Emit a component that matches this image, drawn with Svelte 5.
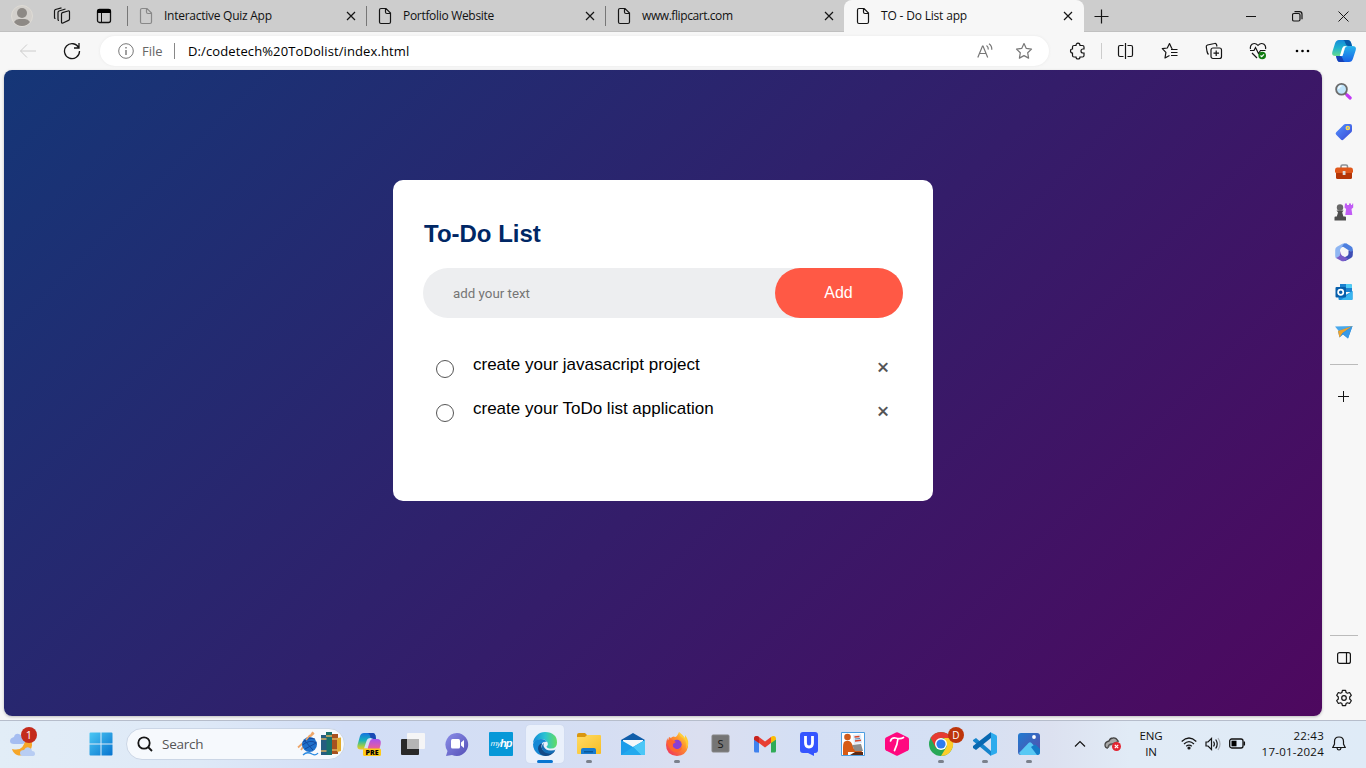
<script>
  const tabs = [
    { title: 'Interactive Quiz App', muted: true, ls: -0.26 },
    { title: 'Portfolio Website', ls: -0.31 },
    { title: 'www.flipcart.com', ls: -0.42 },
    { title: 'TO - Do List app', active: true, ls: -0.18 }
  ];
  const sidebar = ['search', 'tag', 'toolbox', 'games', 'm365', 'outlook', 'drop'];
  const apps = [
    { id: 'copilot' }, { id: 'taskview' }, { id: 'chat' }, { id: 'hp' },
    { id: 'edge', active: true }, { id: 'folder', open: true }, { id: 'mail' },
    { id: 'firefox', open: true }, { id: 's' }, { id: 'gmail' }, { id: 'u' },
    { id: 'reader' }, { id: 't' }, { id: 'chrome', open: true },
    { id: 'vscode', open: true }, { id: 'photos', open: true }
  ];
  let tasks = $state(['create your javasacript project', 'create your ToDo list application']);
  let draft = $state('');

  function add() {
    if (draft.trim()) {
      tasks.push(draft.trim());
      draft = '';
    }
  }
</script>

{#snippet page(muted)}
  <svg class="ln file" class:muted width="14" height="18" viewBox="0 0 14 18"><path d="M1.500 3q0-1.500 1.500-1.500h5l4.500 4.500v9q0 1.500-1.500 1.500H3q-1.500 0-1.500-1.500zM7.500 1.500V5q0 1.500 1.500 1.500h3.500" /></svg>
{/snippet}

{#snippet cross()}
  <svg class="ln bold" width="10" height="10" viewBox="0 0 10 10"><path d="M1 1l8 8M9 1l-8 8" /></svg>
{/snippet}

{#snippet sideIcon(id)}
  <svg width="20" height="20" viewBox="0 0 20 20">
    {#if id === 'search'}
      <path d="M11 11l2 2" stroke="#666" stroke-width="2" /><path d="M13 13l3.200 3" stroke="#c239f5" stroke-width="3.200" stroke-linecap="round" />
      <circle cx="7.500" cy="7.200" r="5.400" fill="#bfe4fa" stroke="#6c6c6c" stroke-width="1.800" /><path d="M4.600 7a3 3 0 0 1 3-3" stroke="#effaff" stroke-width="1.500" fill="none" />
    {:else if id === 'tag'}
      <path d="M10 2.500q.5-.5 1.500-.5H16q2 0 2 2v4.500q0 1-.7 1.700L9.500 17.500q-1.300 1.300-2.600 0l-4.700-4.700q-1.200-1.300 0-2.600z" fill="url(#blueTag)" /><circle cx="13.800" cy="6" r="1.600" fill="#7aa6e8" stroke="#ffdc4a" stroke-width="1.400" />
    {:else if id === 'toolbox'}
      <path d="M7 6V4.500q0-1.500 1.500-1.500h3.500q1.500 0 1.500 1.500V6" fill="none" stroke="#8b9095" stroke-width="1.600" /><rect x="2" y="9" width="16" height="8" rx="1.500" fill="#b53607" /><path d="M1 8q0-2.500 2-2.500h14q2 0 2 2.500v1.500q0 1.500-1.500 1.500h-15Q1 11 1 9.500z" fill="#e0581b" /><rect x="8.700" y="9" width="2.800" height="4" rx=".5" fill="#ddd" />
    {:else if id === 'games'}
      <path d="M11 1.500h2V3h2V1.500h2V3h1l.5-1.500h.7v4l-1.700 1.500.8 6h-7l.8-6-1.600-1.500z" fill="#c15cf5" />
      <circle cx="6" cy="5.500" r="3.200" fill="#686868" /><path d="M2.500 8.500h7L8.200 10.500l1.200 4H11q1 0 1 1V18.500H.5v-3q0-1 1-1h1.300l1.200-4z" fill="#4e4e4e" />
    {:else if id === 'm365'}
      <path d="M7 2.500Q8 1.500 10 1.500h3L7 6q-1 1-1 2.500v3.700q0 2-1.700 2.800L2 16.200q-.8-1-.8-2.500V8q0-2.200 1.800-3.200z" fill="#8fb6f2" />
      <path d="M10 1.500h2.500l4.500 2.700q1.800 1 1.800 3.300v4q-1.300-1.700-3-2.500L9.500 5Q8 4.300 7 6z" fill="#4e80df" />
      <path d="M18.800 7v6q0 2-1.800 3l-4.700 2.600q-1.800 1-3.800 0l-2-1 6.500-3.600q1.500-.8 1.500-2.500V8.300l2 1q2.300 1 2.300-2.300z" fill="#3f4fb5" />
      <path d="M6 9v3q0 2-1.700 2.800L2 16l5 2.800q2 1 4 0l3-2-4-2.200Q6 12.500 6 9z" fill="#7a5dc8" />
      <path d="M8 8l2.300-1.500 3.500 2v4L10.500 14.500 7.500 13z" fill="#f7f7f7" />
    {:else if id === 'outlook'}
      <path d="M6 2h10.500q1.500 0 1.500 1.500V10H6z" fill="#1b82cf" /><path d="M12 2h4.500Q18 2 18 3.500V6h-6z" fill="#50cdf5" /><path d="M4.500 9l7 4 7-4v8q0 1-1 1h-12q-1 0-1-1z" fill="#178cdc" /><path d="M18.500 9v8q0 1-1 1H7z" fill="#38b5ef" /><rect x="1.500" y="5" width="10.500" height="10.500" rx="1" fill="#075fab" /><circle cx="6.700" cy="10.200" r="2.600" stroke="#fff" stroke-width="1.700" fill="none" />
    {:else}
      <path d="M1 4.500l17.500-.5L6 10.500z" fill="#49a8eb" /><path d="M18.500 4L14 16.500l-5-4-3.500 3L4 9z" fill="#2387d7" /><path d="M18.500 4L8.500 11l-3 4.500L4 9z" fill="#f0a32b" /><path d="M18.500 4L8.500 11.500l5.500 5z" fill="#3899e6" />
    {/if}
  </svg>
{/snippet}

{#snippet appIcon(id)}
  <svg width="26" height="26" viewBox="0 0 26 26">
    {#if id === 'copilot'}
      <path d="M8 2h9q2 0 2.500 2.500L20 8h-3.500q-2 0-2.700 2.500L12 16q-1 2.500-3.500 2.500H5q-4.500 0-3.500-4.500l2.500-9Q5 2 8 2z" fill="url(#cpLeft)" /><path d="M13 2h4q2 0 2.500 2.500L20 8h-3.500q-2 0-2.500-3-.5-3-3-3z" fill="#1949b4" /><path d="M14.500 8H21q4.500 0 3.700 5L23 20q-1 4-4 4H9l2.500-6L13 11q.5-3 1.500-3z" fill="url(#cpRight)" /><path d="M17.500 8h-1q-2 0-2.700 2.500L12 16l-.5 1.500H8L10.500 10q.8-3 4-3z" fill="#d5dff5" /><rect x="7" y="17.500" width="18" height="7.500" rx="1.500" fill="#ffca18" /><text x="16" y="23.700" text-anchor="middle" class="pre">PRE</text>
    {:else if id === 'taskview'}
      <rect x="1" y="8" width="18" height="16" rx="1" fill="#292929" /><rect x="7" y="2" width="18" height="16" rx="1" fill="#f5f5f6" /><path d="M7 8h12v10H7z" fill="#b5b5b5" />
    {:else if id === 'chat'}
      <path d="M13 2a11.500 11.500 0 1 1-5 22L2 25l1.500-5A11.500 11.500 0 0 1 13 2z" fill="url(#violet)" /><rect x="7" y="8" width="9" height="9.500" rx="1.500" fill="#fff" /><path d="M17 11.500l3-2.500v8l-3-2.500z" fill="#fff" />
    {:else if id === 'hp'}
      <rect x="1" y="1" width="24" height="24" rx="1" fill="#0698d8" /><text x="2.500" y="15" class="my">my</text><text x="12" y="16" class="hp">hp</text>
    {:else if id === 'edge'}
      <path d="M1 12A12 12 0 0 1 13 1q12 .5 12 10.500 0 6-6 6-4 0-4.500-2 2.500-2 .5-5Q9 5 1 12z" fill="url(#edgeTop)" /><path d="M1 13Q3 8 9 8q4 0 6 3-5-1-6 4 0 7 7 9-5 2-10-1-5-4-5-10z" fill="#1688d5" /><path d="M10 12.500q-2 5 3 8 4 2.500 10-.5-4 5.500-10 5-6-1-7-7 0-5 4-5.500z" fill="#124987" /><path d="M13 11q-2 1-1.500 4 2 5 8 4.500 3 0 4-1-1 3-4 4-7 1-9.500-4.500-1-4.500 3-7z" fill="#136db6" />
    {:else if id === 'folder'}
      <path d="M1 4q0-2 2-2h6l2 2v3H1z" fill="#d99610" /><path d="M1 6h8l2-2h13q1 0 1 1v17q0 1-1 1H2q-1 0-1-1z" fill="url(#folder)" /><path d="M5 23v-4q0-2 2-2h11q2 0 2 2v4z" fill="#167bd0" /><path d="M8 20h9v1.500H8z" fill="#095899" />
    {:else if id === 'mail'}
      <path d="M1 9L13 2l12 7v3H1z" fill="#105eaa" /><path d="M3 9h20v6l-10 4-10-4z" fill="#f5f7fa" /><path d="M1 9l12 7 12-7v15H1z" fill="#1d9cea" /><path d="M25 9L13 16l8 8h4z" fill="#4bc7f7" /><path d="M1 24l12-8 8 8z" fill="#23a9ee" />
    {:else if id === 'firefox'}
      <path d="M8 6q2-1 3 0 2 0 4-5 1 4 4 5 6 4 5 10-2 8.500-11 9Q2 24 2 14q0-4 1.500-7l.5 3 1-4 2 1z" fill="url(#fire)" /><path d="M15 1q0 4 4 6 5 4 3 11 4-5 1-11l-2-3v3q-2-3-6-6z" fill="#ffcd35" /><circle cx="13" cy="13.500" r="4.700" fill="#8b3fd0" /><path d="M3 10q4-3 7 0l2 1-3 2q-1 4 3 5 4 1 6-2-1 6-7 5-6-1-8-11z" fill="#ff652d" />
    {:else if id === 's'}
      <rect x="4" y="4" width="17" height="17" rx="1" fill="#757575" stroke="#858585" /><text x="12.500" y="16.500" text-anchor="middle" class="letter" fill="#151515">S</text>
    {:else if id === 'gmail'}
      <path d="M2 8v12q0 1.500 1.500 1.500H7V11z" fill="#3f82ee" /><path d="M24 8v12q0 1.500-1.500 1.500H19V11z" fill="#2fab57" /><path d="M2 8q0-3 2.500-3 1.300 0 2.500 1l6 4.500L19 6v6l-6 4.500L7 12l-5-3.500z" fill="#e83e33" /><path d="M2 8q0-3 2.500-3Q6 5 7 6v6L2 8.500z" fill="#c5221f" /><path d="M24 8q0-3-2.500-3Q20 5 19 6v6l5-3.500z" fill="#fbbc04" />
    {:else if id === 'u'}
      <path d="M7 1h12q3 0 3 3v15q0 3-3 3h-1v3l-6-3H7q-3 0-3-3V4q0-3 3-3z" fill="#3555ff" /><path d="M9.500 5v7q0 4 3.500 4t3.500-4V5" fill="none" stroke="#fff" stroke-width="2.800" />
    {:else if id === 'reader'}
      <path d="M1.500 1.500h23v23h-23z" fill="#fff" stroke="#4d9ee1" /><path d="M13 4l8-1 1 9-8 1z" fill="#dceafa" /><path d="M14.500 6l5-.5M15 10l6-.7" stroke="#d94728" stroke-width="1.400" /><path d="M15 8l5-.5" stroke="#5b8ab0" /><circle cx="7.500" cy="6" r="3.300" fill="#cf5a1c" /><path d="M3 16q0-6 3-6 4-1 6 3l2 5h7l1 3H8v3H3z" fill="#d65b16" /><path d="M12 14l9-1 2 7h-8z" fill="#8c8c8c" /><path d="M15 21h8v3H10z" fill="#5c2a15" />
    {:else if id === 't'}
      <path d="M12 1.500q1-.5 2 0l10 5q1 .5 1 2v9q0 1.500-1 2l-10 5q-1 .5-2 0l-10-5q-1-.5-1-2v-9q0-1.500 1-2z" fill="#ff087f" /><path d="M6.500 10q1-3.500 5-3 5 1.500 8-.5M14 7.500q-.5 6-3.500 12" fill="none" stroke="#fff" stroke-width="1.700" stroke-linecap="round" />
    {:else if id === 'chrome'}
      <circle cx="13" cy="13" r="12" fill="#27a857" /><path d="M2.600 7A12 12 0 0 1 23.500 7H13L8 17z" fill="#e63b32" /><path d="M23.500 7A12 12 0 0 1 13 25l6-10-3-8z" fill="#fdce2b" /><circle cx="13" cy="13" r="6" fill="#fff" /><circle cx="13" cy="13" r="4.600" fill="#2d7cf0" />
    {:else if id === 'vscode'}
      <path d="M1 9l3-2 15 13v5L1 10z" fill="#1684cc" /><path d="M1 17l3 2L19 7V1L1 15z" fill="#0868b1" /><path d="M18 1l6 3q1 .5 1 2v15q0 1-1 1.500L18 25q1 0 1-2V3q0-2-1-2z" fill="#2cabed" />
    {:else}
      <rect x="2" y="2" width="22" height="22" rx="3" fill="url(#photo)" /><path d="M3 22l9.500-10q1.500-1.500 3 0l8.500 9q0 3-3 3H5q-1 0-2-2z" fill="#57c8f4" /><path d="M15 16l3-2q1-1 2 0l4 4v3q0 3-3 3z" fill="#147bc7" /><circle cx="18" cy="6" r="1.900" fill="#fff" />
    {/if}
  </svg>
{/snippet}

<svg class="defs" width="0" height="0">
  <defs>
    <linearGradient id="blueTag" x2="1" y2="1"><stop stop-color="#5494ff" /><stop offset="1" stop-color="#3a47d5" /></linearGradient>
    <linearGradient id="cpLeft" x2="0" y2="1"><stop stop-color="#1673df" /><stop offset=".45" stop-color="#17b2ba" /><stop offset=".8" stop-color="#a4cf42" /><stop offset="1" stop-color="#f5c52b" /></linearGradient>
    <linearGradient id="cpRight" x2="0" y2="1"><stop stop-color="#a653ee" /><stop offset=".5" stop-color="#e25ca5" /><stop offset="1" stop-color="#f58a45" /></linearGradient>
    <linearGradient id="violet" x2="1" y2="1"><stop stop-color="#8b8ee8" /><stop offset="1" stop-color="#5550b7" /></linearGradient>
    <linearGradient id="edgeTop"><stop stop-color="#148bd8" /><stop offset=".5" stop-color="#2bc3d2" /><stop offset="1" stop-color="#62dc62" /></linearGradient>
    <linearGradient id="folder" x2="1" y2="1"><stop stop-color="#ffdb65" /><stop offset="1" stop-color="#f7bd24" /></linearGradient>
    <linearGradient id="fire" x1="1" x2="0" y2="1"><stop stop-color="#fff044" /><stop offset=".4" stop-color="#ff922b" /><stop offset="1" stop-color="#ed2564" /></linearGradient>
    <linearGradient id="photo" x2="1" y2="1"><stop stop-color="#207bd1" /><stop offset="1" stop-color="#574eaa" /></linearGradient>
    <linearGradient id="win" x2="1" y2="1"><stop stop-color="#4cc8f4" /><stop offset="1" stop-color="#0673cf" /></linearGradient>
    <linearGradient id="pilotA" x2="0" y2="1"><stop stop-color="#168ad9" /><stop offset=".5" stop-color="#20b3ce" /><stop offset="1" stop-color="#65da8e" /></linearGradient>
    <linearGradient id="pilotB" x2="0" y2="1"><stop stop-color="#27b4ec" /><stop offset="1" stop-color="#1962e7" /></linearGradient>
  </defs>
</svg>

<div class="screen">
  <header class="titlebar">
    <div class="slot w44"><svg width="22" height="22" viewBox="0 0 22 22"><circle cx="11" cy="11" r="10.500" fill="#d3d0cc" stroke="#dedbd5" /><circle cx="11" cy="8" r="5" fill="#8d8985" /><path d="M3 17q2-3 5-3h6q3 0 5 3-3 4-8 4t-8-4z" fill="#8d8985" /></svg></div>
    <div class="slot w36"><svg class="ln bold" width="18" height="18" viewBox="0 0 18 18"><path d="M8.500 7q0-1 1-1.400L15 4q1.500-.3 1.500 1v7q0 1-1 1.400L10 16q-1.500.5-1.500-1zM6 13.500q-1 0-1-1V5.500q0-1 1-1.500l6.500-2M2.500 11.500q-1 0-1-1V4q0-1 1-1.500L8.500.8" /></svg></div>
    <div class="slot w47"><svg width="16" height="16" viewBox="0 0 16 16"><rect x="1.500" y="1.500" width="13" height="13" rx="2" fill="none" stroke="#111" stroke-width="1.300" /><path d="M1 3q0-2 2-2h10q2 0 2 2v2H1z" /><path d="M5.500 5v10" stroke="#111" /></svg></div>
    {#each tabs as tab}
      <div class="tab" class:active={tab.active}>
        {@render page(tab.muted)}
        <span class="tab-title" style="letter-spacing: {tab.ls}px">{tab.title}</span>
        {@render cross()}
      </div>
    {/each}
    <div class="slot newtab"><svg class="ln bold" width="15" height="15" viewBox="0 0 15 15"><path d="M7.500.5v14M.5 7.500h14" /></svg></div>
    <div class="window-controls">
      <div class="slot w46"><svg class="ln" width="11" height="11"><path d="M0 5.500h10" /></svg></div>
      <div class="slot w46"><svg class="ln bold" width="11" height="11" viewBox="0 0 11 11"><rect x=".5" y="2.500" width="7.500" height="7.500" rx="1.500" /><path d="M2.500.7H7.500q2.500 0 2.500 2.500v5" /></svg></div>
      <div class="slot w46"><svg class="ln" width="11" height="11" viewBox="0 0 11 11"><path d="M.5.500l10 10M10.500.5l-10 10" /></svg></div>
    </div>
  </header>

  <div class="toolbar">
    <div class="slot w56"><svg class="ln" width="18" height="16" viewBox="0 0 18 16" style:stroke="#ccc"><path d="M17 8H1.500M8 1.500L1.500 8 8 14.500" /></svg></div>
    <div class="slot reload"><svg class="ln" width="18" height="18" viewBox="0 0 18 18" style:stroke-width="1.300"><path d="M15.800 6A7.500 7.500 0 1 0 16.500 9M16 1v5h-5" /></svg></div>
    <div class="address">
      <svg class="ln grey" width="16" height="16" viewBox="0 0 16 16"><circle cx="8" cy="8" r="7.300" /><path d="M8 7v5M8 4v1.500" stroke-width="1.400" /></svg>
      <span class="scheme">File</span>
      <i class="bar"></i>
      <span class="url">D:/codetech%20ToDolist/index.html</span>
      <svg class="ln grey bold" width="16" height="16" viewBox="0 0 16 16"><path d="M.8 14.500L5.500 3h.5l4.700 11.500M2.500 10.500h6.800M9.500 2.500q2 1.300 1.800 4M12 .8q3 2 2.800 6" /></svg>
      <svg class="ln grey bold star" width="18" height="18" viewBox="0 0 18 18"><path stroke-linejoin="round" d="M9 1.500l2.300 4.900 5.200.7-3.800 3.700.9 5.300L9 13.600l-4.600 2.500.9-5.300L1.500 7.100l5.200-.7z" /></svg>
    </div>
    <div class="slot w56"><svg class="ln ext" width="18" height="18" viewBox="0 0 18 18"><path d="M5 3.500h2q0-2.300 2-2.300t2 2.300h2.500q1.500 0 1.500 1.500V7h-1q-2 0-2 2t2 2h1v2.500q0 1.500-1.500 1.500H11q0 2-2 2t-2-2H5q-1.500 0-1.500-1.500V11Q1.500 11 1.500 9t2-2V5Q3.500 3.500 5 3.500z" /></svg></div>
    <div class="tools">
      <div class="slot w44"><svg class="ln bold" width="18" height="18" viewBox="0 0 18 18"><path d="M8.500 1v16M6.500 3.500H3Q1.500 3.500 1.500 5v8q0 1.500 1.500 1.500h3.500M10.500 3.500H14q1.500 0 1.500 1.500v8q0 1.500-1.500 1.500h-3.500" /></svg></div>
      <div class="slot w44"><svg class="ln bold" width="18" height="18" viewBox="0 0 18 18"><path stroke-linejoin="round" d="M11.500 6.500l-.8-.3L8.500 1.500 6.300 6l-5 .7 3.600 3.600L4 16l4.500-2.500M10 7.500h6.500M10 10.500h6.500M10 13.500h6.500" /></svg></div>
      <div class="slot w44"><svg class="ln bold" width="18" height="18" viewBox="0 0 18 18"><path d="M3.500 12.500q-1-1-1.500-3L1.300 5Q1 3.500 2.500 3l7-1.500Q11 1 11.500 2.500l.5 2" /><rect x="6" y="6" width="10.500" height="10.500" rx="2" /><path d="M11.200 8.500v5.500M8.500 11.200H14" /></svg></div>
      <div class="slot w44"><svg class="ln bold" width="18" height="18" viewBox="0 0 18 18"><path d="M1.500 7Q.8 4 3 2.300q3-2 6 1 3-3 6-1Q17.200 4 16.500 7M3 11l5 5M1 8.500h4l1.500-3 3 6 2-3h5" /><circle cx="13.200" cy="13.500" r="3.800" fill="#107c10" stroke="none" /><path d="M11.500 13.500l1.200 1.200 2.300-2.300" stroke="#fff" /></svg></div>
      <div class="slot w44"><svg width="15" height="4"><circle cx="2" cy="2" r="1.300" /><circle cx="7.500" cy="2" r="1.300" /><circle cx="13" cy="2" r="1.300" /></svg></div>
    </div>
    <div class="slot pilot"><svg width="26" height="24" viewBox="0 0 26 24"><path d="M8 1h9q2.300 0 3 2.500L21 7h-4.500q-2 0-2.700 2.300l-1.500 5.200Q11.500 17 9 17H4.500Q.3 17 1.300 13L4 4.500Q5 1 8 1z" fill="url(#pilotA)" /><path d="M12 1h5q2.300 0 3 2.500L21 7h-4q-2 0-2.700-3Q13.700 1 12 1z" fill="#075aa8" /><path d="M16.500 7H21q5 0 3.700 4.300L22 19.500Q21 23 18 23H9q-2.200 0-3-2.500L5 17h4q2.500 0 3.300-2.500l1.500-5.200Q14.500 7 16.500 7z" fill="url(#pilotB)" /><path d="M5 17h4q2 0 2.800 3 .7 3 2.200 3H9q-2.200 0-3-2.500z" fill="#1740b5" /><path d="M16.500 7q-2 0-2.700 2.300L11.500 17H8.800l2.400-7.700Q12 7 14 7z" fill="#fff" /></svg></div>
  </div>

  <div class="body">
    <main class="viewport">
      <section class="todo">
        <h2>To-Do List</h2>
        <div class="row">
          <input type="text" placeholder="add your text" bind:value={draft} />
          <button onclick={add}>Add</button>
        </div>
        <ul>
          {#each tasks as task}
            <li><i class="ring"></i><span class="task">{task}</span><span class="remove">×</span></li>
          {/each}
        </ul>
      </section>
    </main>
    <aside>
      {#each sidebar as id}
        <div class="slot h40">{@render sideIcon(id)}</div>
      {/each}
      <hr />
      <div class="slot plus"><svg class="ln" width="11" height="11"><path d="M5.500 0v11M0 5.500h11" /></svg></div>
      <hr class="low" />
      <div class="slot panel"><svg class="ln bold" width="14" height="12" viewBox="0 0 14 12"><rect x=".6" y=".6" width="12.800" height="10.800" rx="2" /><path d="M9.500.5v11" /></svg></div>
      <div class="slot gear"><svg class="ln bold" width="18" height="18" viewBox="0 0 18 18"><circle cx="9" cy="9" r="2.300" /><path d="M7.400 1.300h3.200l.5 2.200 1.300.7 2.200-.7 1.700 2.800-1.600 1.700v2l1.600 1.700-1.700 2.800-2.200-.7-1.300.7-.5 2.200H7.400l-.5-2.200-1.300-.7-2.200.7-1.700-2.800L3.300 10V8L1.700 6.300l1.700-2.800 2.200.7 1.300-.7z" stroke-linejoin="round" /></svg></div>
    </aside>
  </div>

  <footer class="taskbar">
    <div class="weather">
      <svg width="26" height="26" viewBox="0 0 26 26"><path d="M21 8q4 5 0 12-6 6-13 4-4-2-5-6 12 3 13-10z" fill="#f6a629" /><path d="M5 13q-4 0-4-3t4-4q1-4 5-3 3 1 3 4 3 0 3 3t-3 3z" fill="#a5bdf1" /><path d="M14 25q-3 0-3-3t4-3q2-4 6-2 2 1 2 3 3 0 3 3 0 2-3 2z" fill="#b8cdf3" /></svg>
      <b class="count">1</b>
    </div>
    <div class="slot start"><svg width="24" height="24" viewBox="0 0 24 24"><path d="M1.500.5h10v11h-11v-10q0-1 1-1zM12.500.5h10q1 0 1 1v10h-11zM.5 12.500h11v11h-10q-1 0-1-1zM12.500 12.500h11v10q0 1-1 1h-10z" fill="url(#win)" /></svg></div>
    <div class="searchbox">
      <svg class="ln" width="16" height="16" viewBox="0 0 16 16" style:stroke-width="1.800"><circle cx="7" cy="7" r="5.700" /><path d="M11 11l4 4" /></svg>
      <span>Search</span>
      <svg width="46" height="27" viewBox="0 0 46 27"><path d="M2 17.500L18 3M5 20L17 2" stroke="#eda66b" stroke-width="1.800" /><circle cx="13.500" cy="14.500" r="7.500" fill="#1e70cb" /><path d="M7 12q6-5 12-3M6.500 15q7-6 14-2M9 19l11-6M8 10l9 10" stroke="#14489d" fill="none" /><path d="M10 10l4-5" stroke="#eda66b" stroke-width="1.500" /><path d="M7 25q4-4 9-1 4 2 6-1" stroke="#2b8be2" fill="none" stroke-width="1.300" /><path d="M30 2h6v23h-6z" fill="#18706c" /><path d="M25 5h5.500v20H25z" fill="#255d80" /><path d="M36 4h6v20h-6z" fill="#a8511f" /><path d="M41 8l4-.5V21l-4 1z" fill="#e2ab2d" /><path d="M25 9h5.500M36 9h6M36 20h6M30 6h6M25 21h5.500" stroke="#ddb05d" stroke-width="1.300" /></svg>
    </div>
    {#each apps as app}
      <div class="app" class:current={app.active} class:open={app.open}>
        {@render appIcon(app.id)}
        {#if app.id === 'chrome'}<b class="profile">D</b>{/if}
      </div>
    {/each}
    <div class="tray">
      <svg class="ln bold" width="12" height="8" viewBox="0 0 12 8"><path d="M1 6.500l5-5 5 5" /></svg>
      <svg class="cloud" width="18" height="16" viewBox="0 0 18 16"><path d="M4 12Q1 12 1 9t4-4q1-3 4-3 3-.5 5 3" fill="#aaa" stroke="#444" stroke-width="1.300" /><path d="M4 12q0-4 4-4l7-3" stroke="#555" stroke-width="1.300" fill="none" /><circle cx="12.500" cy="10.500" r="4.500" fill="#e32431" /><path d="M10.800 8.800l3.400 3.400m0-3.400l-3.400 3.400" stroke="#fff" stroke-width="1.200" /></svg>
      <span class="lang">ENG<br />IN</span>
      <svg class="ln bold wifi" width="16" height="13" viewBox="0 0 16 13"><path d="M.7 4.500q7.300-7 14.600 0M3 7q5-4.800 10 0M5.200 9.300q2.800-2.500 5.600 0" /><circle cx="8" cy="11" r="1" fill="#111" /></svg>
      <svg class="ln bold sound" width="17" height="14" viewBox="0 0 17 14"><path d="M1 5h2L6.500 1.500v11L3 9H1zM8.500 4.500q1.800 2.500 0 5M10.700 2.500q3 4.500 0 9" /><path d="M13 1q4 6 0 12" stroke="#a6abb3" /></svg>
      <svg class="battery" width="17" height="11" viewBox="0 0 17 11"><rect x=".7" y="1" width="13.300" height="9" rx="2" fill="none" stroke="#111" stroke-width="1.300" /><rect x="2.500" y="2.700" width="5" height="5.600" /><path d="M15.300 3.500v4" stroke="#111" stroke-width="1.500" /></svg>
      <span class="clock">22:43<br />17-01-2024</span>
      <svg class="ln bold bell" width="14" height="15" viewBox="0 0 14 15"><path d="M2.500 8V5.500Q2.500 1 7 1t4.500 4.500V8l1.700 3.500H.8zM5 12q.3 2 2 2t2-2" /></svg>
    </div>
  </footer>
</div>

<style>
  :global(body) { margin: 0; overflow: hidden; }
  * { box-sizing: border-box; }
  svg { display: block; flex: none; }
  .defs { position: absolute; }
  .screen { width: 1366px; height: 768px; display: flex; flex-direction: column; background: #f7f7f7; font-family: 'Open Sans', 'Noto Sans', sans-serif; color: #111; overflow: hidden; }
  .ln { fill: none; stroke: #151515; stroke-width: 1; }
  .bold { stroke-width: 1.2; }
  .file { stroke-width: 1.2; }
  .muted { stroke: #888; }
  .grey { stroke: #777; }
  .slot { display: flex; align-items: center; justify-content: center; flex: none; }
  .w36 { width: 36px; }
  .w44 { width: 44px; }
  .w46 { width: 46px; }
  .w47 { width: 47px; }
  .w56 { width: 56px; }
  .h40 { height: 40px; }

  .titlebar { height: 32px; flex: none; display: flex; background: #cdcdcd; box-shadow: inset 0 -1px #c0c0c0; }
  .tab { width: 239px; display: flex; align-items: center; padding: 0 10px 0 12px; position: relative; flex: none; }
  .tab:not(.active)::before { content: ''; position: absolute; left: 0; top: 6px; width: 1px; height: 20px; background: #777; }
  .tab.active { width: 240px; padding-right: 11px; background: #f7f7f7; border-radius: 8px 8px 0 0; }
  .tab-title { flex: 1; margin-left: 11px; font-size: 12px; line-height: 16px; white-space: nowrap; }
  .newtab { width: 35px; }
  .window-controls { margin-left: auto; display: flex; }

  .toolbar { height: 38px; flex: none; display: flex; align-items: center; }
  .reload { width: 32px; }
  .address { width: 949px; height: 30px; margin-left: 12px; padding: 0 16px 0 18px; border-radius: 15px; background: #fff; box-shadow: 0 0 3px #e8e8e8; display: flex; align-items: center; font-size: 13px; white-space: nowrap; }
  .scheme { width: 32px; margin-left: 8px; color: #666; }
  .bar { width: 1px; height: 16px; background: #888; margin-right: 13px; }
  .url { flex: 1; letter-spacing: .11px; color: #000; }
  .star { margin-left: 22px; }
  .ext { margin-left: 1px; stroke-width: 1.2; }
  .tools { display: flex; align-items: center; margin-left: -4px; padding-left: 2px; border-left: 1px solid #ccc; height: 16px; }
  .pilot { width: 40px; }

  .body { height: 650px; flex: none; display: flex; }
  .viewport { width: 1318px; height: 646px; margin-left: 4px; flex: none; padding: 110px 10px 0; border-radius: 8px; background: linear-gradient(135deg, #153677, #4e085f); box-shadow: 0 1px 3px #bbb; font-family: 'Liberation Sans', Arial, sans-serif; }
  .todo { width: 540px; height: 321px; margin: 0 auto; padding: 40px 30px 0; background: #fff; border-radius: 10px; }
  h2 { margin: 0 0 20px 1px; font-size: 24px; line-height: 28px; color: #002765; }
  .row { height: 50px; display: flex; background: #edeef0; border-radius: 30px; padding-left: 20px; margin-bottom: 25px; }
  input { flex: 1; border: 0; outline: 0; padding: 10px; background: none; font: 13.333px Roboto, 'Liberation Sans', sans-serif; }
  input::placeholder { color: #757575; }
  button { width: 128px; border: 0; padding: 0 1px 0 0; border-radius: 40px; background: #ff5945; color: #fff; font: 16px 'Liberation Sans', Arial, sans-serif; }
  ul { list-style: none; margin: 0; padding: 0; }
  li { height: 44px; display: flex; font-size: 17px; line-height: 20px; padding-left: 13px; }
  .ring { width: 18px; height: 18px; border: 1px solid #555; border-radius: 50%; margin-top: 17px; }
  .task { margin: 12px 0 0 19px; flex: 1; color: #000; }
  .remove { width: 40px; height: 40px; margin-top: 4px; text-align: center; font: 600 22px/39px 'Open Sans', sans-serif; color: #555; }

  aside { width: 44px; padding-top: 2px; }
  hr { width: 28px; height: 1px; margin: 12px 0 0 8px; border: 0; background: #bbb; }
  .plus { height: 63px; padding-right: 1px; }
  hr.low { margin-top: 207px; }
  .panel { height: 44px; }
  .gear { height: 36px; }

  .taskbar { height: 48px; flex: none; display: flex; align-items: center; padding-bottom: 2px; border-top: 1px solid #b6bdcb; background: linear-gradient(90deg, #e2edf7 0, #dee9f7 200px, #d2def6 345px, #d5def3 600px, #dbdff0 700px, #d4dff4 800px, #d5e0f4 950px, #dce1f0 1050px, #e1ebf6 1130px, #dfebf7); }
  .weather { width: 78px; padding-left: 9px; position: relative; }
  .count, .profile { position: absolute; border-radius: 50%; color: #fff; text-align: center; font-weight: 400; width: 16px; height: 16px; line-height: 16px; font-size: 11px; }
  .count { left: 21px; top: -4px; }
  .count { background: #c42b1c; }
  .start { width: 45px; }
  .searchbox { width: 219px; height: 32px; margin: 0 3px 0 3px; padding: 0 2px 0 10px; border: 1px solid #cbd6e6; border-radius: 16px; display: flex; align-items: center; background: #f6f9fd; }
  .searchbox { margin-right: 2px; }
  .searchbox span { flex: 1; margin-left: 9px; font-size: 13.5px; color: #555; letter-spacing: -.25px; }
  .app { width: 38px; height: 38px; margin: 0 3px; display: flex; justify-content: center; align-items: center; position: relative; flex: none; border-radius: 4px; }
  .current { background: #eaf0fb; box-shadow: 0 0 1px #bac8df; }
  .open::after, .current::after { content: ''; position: absolute; bottom: 0; left: 16px; width: 6px; height: 3px; border-radius: 2px; background: #7b818c; }
  .current::after { left: 11px; width: 16px; background: #0875d1; }
  .profile { right: -4px; top: 2px; background: #bd350b; font-size: 10px; }
  .pre { font: 800 7px 'Open Sans', sans-serif; }
  .my { font: italic 8px 'Open Sans', sans-serif; fill: #fff; letter-spacing: -.5px; }
  .hp { font: italic 700 11px 'Liberation Sans', sans-serif; fill: #fff; letter-spacing: -1px; }
  .letter { font: 11px 'Open Sans', sans-serif; }
  .tray { margin-left: 23px; display: flex; align-items: center; font-size: 11.5px; line-height: 16px; white-space: nowrap; }
  .cloud { margin-left: 18px; }
  .lang { width: 32px; margin-left: 13px; text-align: center; letter-spacing: -.1px; }
  .wifi { margin-left: 14px; }
  .sound { margin-left: 8px; }
  .battery { margin-left: 7px; }
  .clock { width: 72px; margin-left: 6px; text-align: right; letter-spacing: .24px; }
  .bell { margin-left: 8px; }
</style>
